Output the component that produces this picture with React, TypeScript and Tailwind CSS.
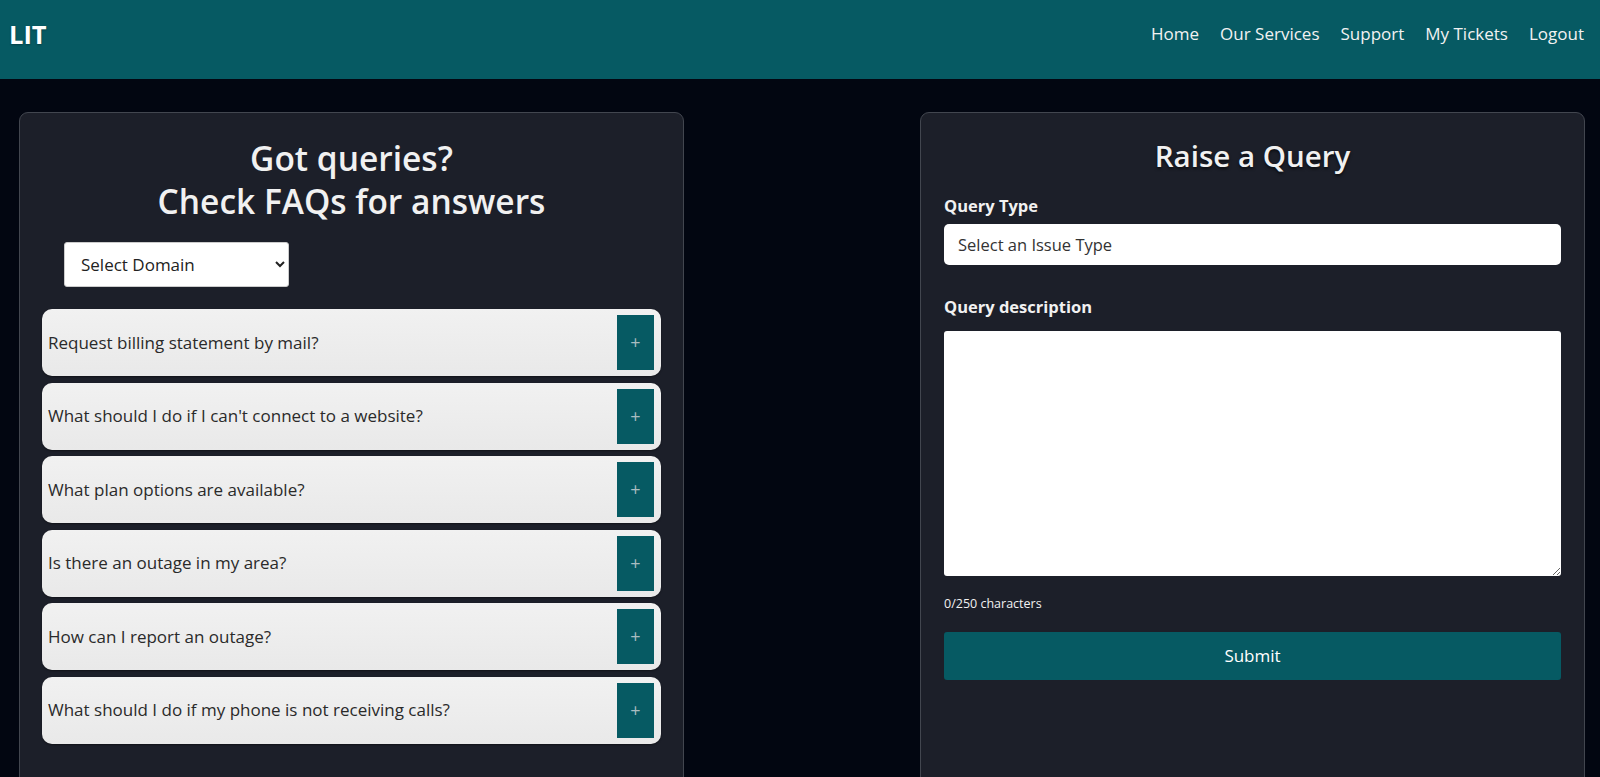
const faqs = [
  "Request billing statement by mail?",
  "What should I do if I can't connect to a website?",
  "What plan options are available?",
  "Is there an outage in my area?",
  "How can I report an outage?",
  "What should I do if my phone is not receiving calls?",
];

const NavBar = () => {
  return (
    <div className="w-full h-[79px] bg-[#065a63] flex justify-between items-center pl-[9px] pr-[16px] pb-[11px]">
      <div className="text-white font-bold text-[25.5px] [text-shadow:0_1px_2px_rgba(0,0,0,0.3)]">LIT</div>
      <div className="flex items-center gap-[21px] text-[17px] text-[#f2f2f2]">
        <a>Home</a>
        <a>Our Services</a>
        <a>Support</a>
        <a>My Tickets</a>
        <a>Logout</a>
      </div>
    </div>
  );
};

const FaqItem = ({ question }: { question: string }) => {
  return (
    <div className="h-[67px] rounded-[10px] bg-gradient-to-b from-[#f1f1f1] to-[#e9e9e9] flex items-center justify-between pl-[6px] pr-[7px] shadow-[0_1px_2px_rgba(0,0,0,0.4)]">
      <span className="text-[17px] text-[#2a2a2a]">{question}</span>
      <button className="w-[37px] h-[55px] bg-[#065a63] flex items-center justify-center text-[#a9bcc0] text-[18px]">
        +
      </button>
    </div>
  );
};

const FaqPanel = () => {
  return (
    <div className="w-[665px] h-[700px] bg-[#1c1f29] border border-[#42464f] rounded-[9px] px-[22px] pt-[24px]">
      <h2 className="text-center text-[#f1f1f1] font-semibold text-[33.5px] leading-[43px]">
        Got queries?
        <br />
        Check FAQs for answers
      </h2>
      <div className="pl-[22px] mt-[19px] mb-[22px]">
        <select className="w-[225px] h-[45px] bg-white rounded-[3px] px-[12px] text-[17px] text-[#222] border border-[#ccc]">
          <option>Select Domain</option>
        </select>
      </div>
      <div className="flex flex-col gap-[6.5px]">
        {faqs.map((q) => (
          <FaqItem key={q} question={q} />
        ))}
      </div>
    </div>
  );
};

const QueryPanel = () => {
  return (
    <div className="w-[665px] h-[700px] bg-[#1c1f29] border border-[#42464f] rounded-[9px] px-[23px] pt-[23px]">
      <h2 className="text-center text-[#f1f1f1] font-semibold text-[29.5px] leading-[40px] [text-shadow:0_2px_3px_rgba(0,0,0,0.6)]">
        Raise a Query
      </h2>
      <label className="block mt-[18px] text-[16.5px] leading-[24px] font-bold text-[#f1f1f1]">Query Type</label>
      <input
        className="mt-[6px] block w-full h-[41px] bg-white rounded-[5px] px-[14px] text-[16.5px] text-[#333] placeholder-[#333] outline-none"
        placeholder="Select an Issue Type"
      />
      <label className="block mt-[30px] text-[16.5px] leading-[24px] font-bold text-[#f1f1f1]">Query description</label>
      <textarea className="mt-[12px] block w-full h-[245px] bg-white rounded-[3px] outline-none"></textarea>
      <div className="mt-[19px] text-[12.5px] leading-[18px] text-[#f1f1f1]">0/250 characters</div>
      <button className="mt-[19px] block w-full h-[48px] bg-[#065a63] rounded-[3px] text-white text-[17px]">
        Submit
      </button>
    </div>
  );
};

export default function App() {
  return (
    <div className="h-[777px] overflow-hidden bg-[#020611] font-['Open_Sans',sans-serif]">
      <NavBar />
      <div className="flex justify-between pl-[19px] pr-[15px] pt-[33px]">
        <FaqPanel />
        <QueryPanel />
      </div>
    </div>
  );
}
